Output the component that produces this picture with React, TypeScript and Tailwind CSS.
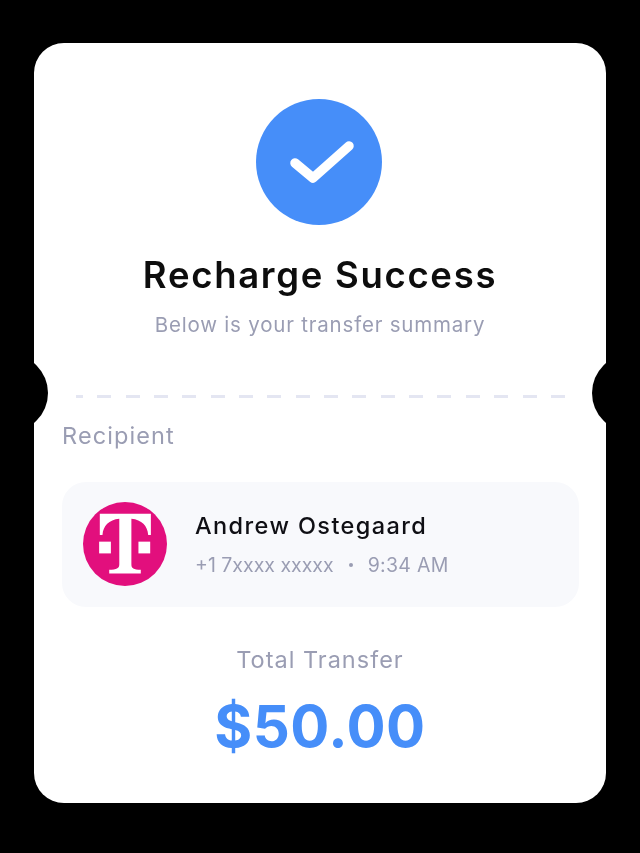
const dashes = Array.from({ length: 18 }, (_, i) => i);

function TLogo() {
  return (
    <svg viewBox="40 37 250 250" className="mt-[20px] h-[84px] w-[84px] shrink-0 self-start">
      <circle cx="165" cy="162" r="125" fill="#e20f7d" />
      <path
        fill="#ffffff"
        d="M90 72H242V135H234C232 108 215 90 184 87V222C184 235 190 237 212 239V250H118V239C140 237 148 235 148 222V87C117 90 100 108 98 135H90Z"
      />
      <rect x="88" y="155" width="35" height="35" fill="#ffffff" />
      <rect x="205" y="155" width="35" height="35" fill="#ffffff" />
    </svg>
  );
}

export default function App() {
  return (
    <div className="h-[853px] w-[640px] overflow-hidden bg-black pl-[34px] pt-[43px] font-['Inter',sans-serif]">
      <div className="relative flex h-[760px] w-[572px] flex-col overflow-hidden rounded-[30px] bg-white blur-[0.6px]">
        <div className="absolute left-[-64px] top-[311px] h-[78px] w-[78px] rounded-full bg-black" />
        <div className="absolute right-[-64px] top-[311px] h-[78px] w-[78px] rounded-full bg-black" />

        <div className="ml-[222px] mt-[56px] flex h-[126px] w-[126px] items-center justify-center rounded-full bg-[#468ef9]">
          <svg viewBox="0 0 126 126" className="h-[126px] w-[126px]" fill="none">
            <path d="M39 64L57 79L93 47" stroke="#ffffff" strokeWidth="9.5" strokeLinecap="round" strokeLinejoin="round" />
          </svg>
        </div>

        <h1 className="mt-[26px] text-center text-[36.5px] font-semibold leading-[48px] tracking-[1.7px] text-[#0d0d0d]">
          Recharge Success
        </h1>
        <p className="mt-[14px] text-center text-[20.5px] leading-[24px] tracking-[0.8px] text-[#9a9db3]">
          Below is your transfer summary
        </p>

        <div className="ml-[42px] mt-[58px] flex w-[489px] justify-between">
          {dashes.map((i) => (
            <span key={i} className={i === 0 ? "h-[3px] w-[7px] bg-[#e4e6f2]" : "h-[3px] w-[14px] bg-[#e4e6f2]"} />
          ))}
        </div>

        <p className="ml-[28px] mt-[23px] text-[23.5px] leading-[30px] tracking-[1.1px] text-[#9a9db3]">Recipient</p>

        <div className="ml-[28px] mt-[31px] flex h-[125px] w-[517px] items-center gap-[28px] rounded-[24px] bg-[#f8f9fc] pl-[21px]">
          <TLogo />
          <div className="flex flex-col gap-[12px]">
            <p className="text-[23.5px] font-medium leading-[28px] tracking-[1.4px] text-[#0f0f14]">Andrew Ostegaard</p>
            <p className="flex items-center text-[19.5px] leading-[26px] text-[#9a9db3]">
              <span>+1 7xxxx xxxxx</span>
              <span className="mx-[15px] h-[4px] w-[4px] rounded-full bg-[#9a9db3]" />
              <span className="tracking-[0.3px]">9:34 AM</span>
            </p>
          </div>
        </div>

        <p className="mt-[38px] text-center text-[23.5px] leading-[30px] tracking-[1px] text-[#9a9db3]">Total Transfer</p>
        <p className="mt-[16px] text-center text-[58px] font-bold leading-[70px] tracking-[0.5px] text-[#468ef9]">$50.00</p>
      </div>
    </div>
  );
}
